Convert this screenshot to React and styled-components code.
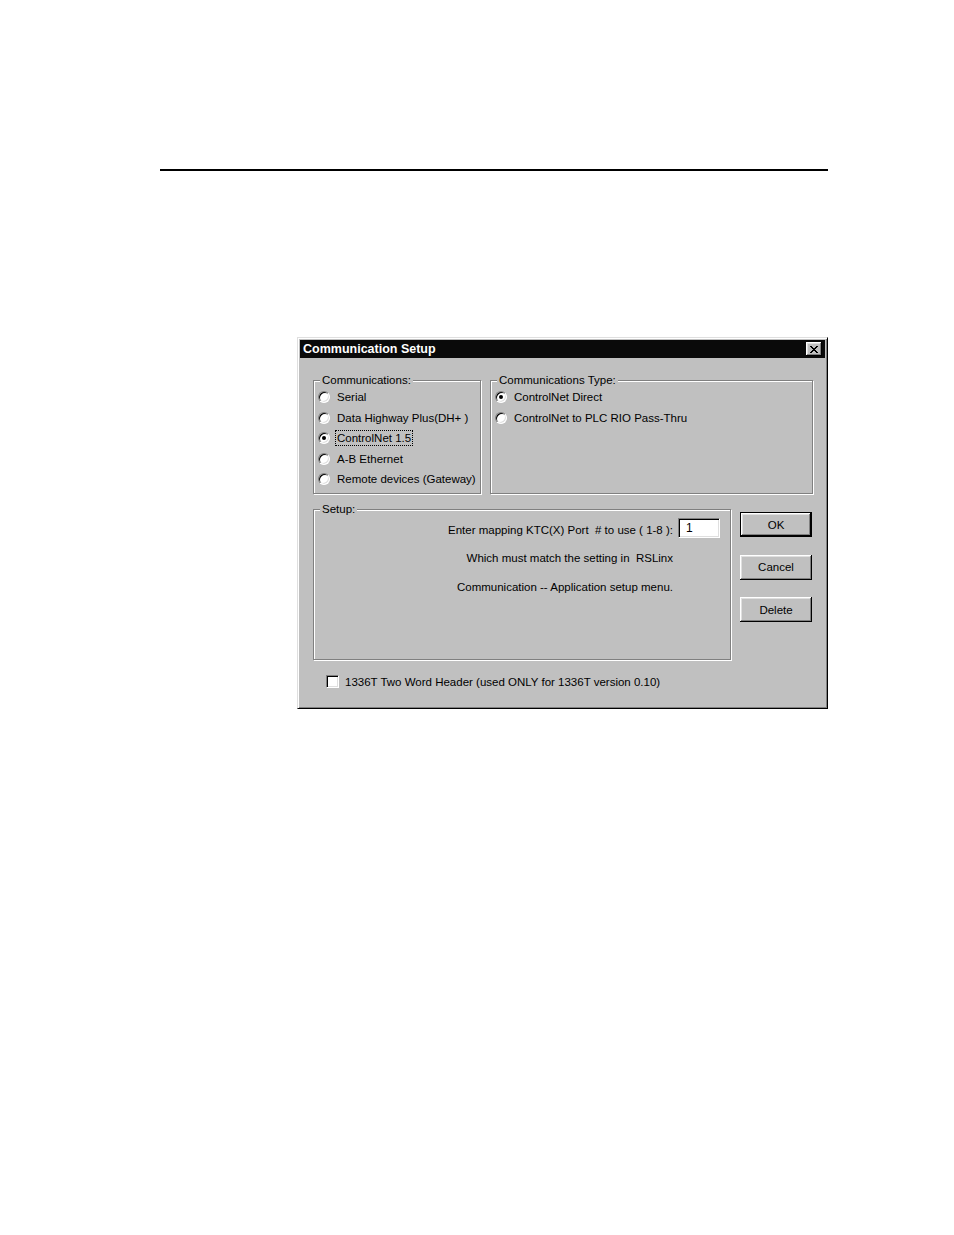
import React from "react";
import styled, { createGlobalStyle } from "styled-components";

const GlobalStyle = createGlobalStyle`
  html, body {
    margin: 0;
    padding: 0;
    background: #fff;
  }
  body {
    font-family: "Liberation Sans", Arial, sans-serif;
  }
`;

const Page = styled.div`
  width: 954px;
  height: 1235px;
  padding-top: 169px;
  box-sizing: border-box;
`;

const Rule = styled.hr`
  margin: 0 0 0 160px;
  width: 668px;
  height: 2px;
  border: 0;
  background: #000;
`;

const Dialog = styled.div`
  margin: 166px 0 0 297px;
  width: 531px;
  height: 372px;
  box-sizing: border-box;
  padding: 2px;
  background: #c0c0c0;
  border: 1px solid;
  border-color: #dfdfdf #000 #000 #dfdfdf;
  box-shadow: inset 1px 1px #fff, inset -1px -1px #808080;
  display: flex;
  flex-direction: column;
  font-size: 11.5px;
  color: #000;
`;

const TitleBar = styled.div`
  height: 18px;
  display: flex;
  align-items: center;
  justify-content: space-between;
  padding: 0 3px;
  background: #0a0a0a;
  color: #fff;
  font-weight: bold;
  font-size: 12.5px;
`;

const CloseButton = styled.div`
  width: 16px;
  height: 14px;
  display: flex;
  align-items: center;
  justify-content: center;
  background: #c0c0c0;
  box-shadow: inset -1px -1px #000, inset 1px 1px #fff, inset -2px -2px #808080,
    inset 2px 2px #dfdfdf;
`;

const Body = styled.div`
  display: flex;
  flex-direction: column;
  padding: 15px 12px 0 13px;
`;

const Row = styled.div`
  display: flex;
  gap: 9px;
  margin-top: ${(p) => p.$top || 0}px;
`;

const Group = styled.fieldset`
  margin: 0;
  padding: 0;
  min-width: 0;
  box-sizing: border-box;
  width: ${(p) => (p.$width ? `${p.$width}px` : "auto")};
  flex: ${(p) => (p.$width ? "none" : "1")};
  height: ${(p) => p.$height}px;
  border: 1px solid #808080;
  box-shadow: inset 1px 1px #fff, 1px 1px #fff;
`;

const Legend = styled.legend`
  margin-left: 6px;
  padding: 0 2px;
  line-height: 14px;
  background: #c0c0c0;
`;

const RadioRow = styled.label`
  display: flex;
  align-items: center;
  gap: 7px;
  height: 20.5px;
  padding-left: 4px;
  white-space: nowrap;
`;

const Radio = styled.span`
  position: relative;
  width: 12px;
  height: 12px;
  box-sizing: border-box;
  border-radius: 50%;
  border: 1px solid;
  border-color: #808080 #fff #fff #808080;
  box-shadow: inset 1px 1px #000, inset -1px -1px #dfdfdf;
  background: #fff;
  flex: none;

  &::after {
    content: "";
    display: ${(p) => (p.$checked ? "block" : "none")};
    position: absolute;
    left: 3px;
    top: 3px;
    width: 4px;
    height: 4px;
    border-radius: 50%;
    background: #000;
  }
`;

const FocusLabel = styled.span`
  outline: 1px dotted #000;
  outline-offset: 1px;
`;

const SetupBody = styled.div`
  display: flex;
  flex-direction: column;
  align-items: flex-end;
  padding-right: 10px;
`;

const PortRow = styled.div`
  display: flex;
  align-items: center;
  gap: 5px;
  margin-top: 2px;
`;

const SetupText = styled.div`
  line-height: 13px;
  white-space: nowrap;
  margin-top: ${(p) => p.$top || 0}px;
  margin-right: ${(p) => (p.$indent ? 47 : 0)}px;
  padding-top: ${(p) => p.$drop || 0}px;
`;

const TextBox = styled.div`
  width: 42px;
  height: 20px;
  box-sizing: border-box;
  padding-left: 7px;
  display: flex;
  align-items: center;
  background: #fff;
  border: 1px solid;
  border-color: #808080 #fff #fff #808080;
  box-shadow: inset 1px 1px #000, inset -1px -1px #dfdfdf;
  font-size: 12px;
`;

const ButtonColumn = styled.div`
  display: flex;
  flex-direction: column;
  gap: 17.5px;
  padding-top: 10px;
  width: 72px;
`;

const Button = styled.button`
  width: 72px;
  height: 25px;
  box-sizing: border-box;
  padding: 0;
  font-family: inherit;
  font-size: 11.5px;
  color: #000;
  background: #c0c0c0;
  border: ${(p) => (p.$default ? "1px solid #000" : "none")};
  box-shadow: inset -1px -1px #000, inset 1px 1px #fff, inset -2px -2px #808080,
    inset 2px 2px #dfdfdf;
`;

const CheckRow = styled.label`
  display: flex;
  align-items: center;
  gap: 6px;
  margin-top: 15px;
  padding-left: 13px;
  white-space: nowrap;
`;

const CheckBox = styled.span`
  width: 13px;
  height: 13px;
  box-sizing: border-box;
  border: 1px solid;
  border-color: #808080 #fff #fff #808080;
  box-shadow: inset 1px 1px #000, inset -1px -1px #dfdfdf;
  background: #fff;
  flex: none;
`;

const closeGlyph = [
  [0, 0, 2], [6, 0, 2],
  [1, 1, 2], [5, 1, 2],
  [2, 2, 4],
  [3, 3, 2],
  [2, 4, 4],
  [1, 5, 2], [5, 5, 2],
  [0, 6, 2], [6, 6, 2],
];

const CloseIcon = () => (
  <svg width="8" height="7" viewBox="0 0 8 7" shapeRendering="crispEdges">
    {closeGlyph.map(([x, y, w], i) => (
      <rect key={i} x={x} y={y} width={w} height="1" fill="#000" />
    ))}
  </svg>
);

const communications = [
  { label: "Serial" },
  { label: "Data Highway Plus(DH+ )" },
  { label: "ControlNet 1.5", checked: true, focused: true },
  { label: "A-B Ethernet" },
  { label: "Remote devices (Gateway)" },
];

const types = [
  { label: "ControlNet Direct", checked: true },
  { label: "ControlNet to PLC RIO Pass-Thru" },
];

const RadioOption = ({ label, checked, focused }) => (
  <RadioRow>
    <Radio $checked={checked} />
    {focused ? <FocusLabel>{label}</FocusLabel> : <span>{label}</span>}
  </RadioRow>
);

export default function App() {
  return (
    <Page>
      <GlobalStyle />
      <Rule />
      <Dialog>
        <TitleBar>
          <span>Communication Setup</span>
          <CloseButton>
            <CloseIcon />
          </CloseButton>
        </TitleBar>
        <Body>
          <Row>
            <Group $width={168} $height={121}>
              <Legend>Communications:</Legend>
              {communications.map((c) => (
                <RadioOption key={c.label} {...c} />
              ))}
            </Group>
            <Group $height={121}>
              <Legend>Communications Type:</Legend>
              {types.map((c) => (
                <RadioOption key={c.label} {...c} />
              ))}
            </Group>
          </Row>
          <Row $top={8}>
            <Group $width={418} $height={158}>
              <Legend>Setup:</Legend>
              <SetupBody>
                <PortRow>
                  <SetupText $drop={4}>Enter mapping KTC(X) Port&nbsp; # to use ( 1-8 ):</SetupText>
                  <TextBox>1</TextBox>
                </PortRow>
                <SetupText $indent $top={14}>
                  Which must match the setting in&nbsp; RSLinx
                </SetupText>
                <SetupText $indent $top={16}>
                  Communication -- Application setup menu.
                </SetupText>
              </SetupBody>
            </Group>
            <ButtonColumn>
              <Button $default>OK</Button>
              <Button>Cancel</Button>
              <Button>Delete</Button>
            </ButtonColumn>
          </Row>
          <CheckRow>
            <CheckBox />
            <span>1336T Two Word Header (used ONLY for 1336T version 0.10)</span>
          </CheckRow>
        </Body>
      </Dialog>
    </Page>
  );
}
